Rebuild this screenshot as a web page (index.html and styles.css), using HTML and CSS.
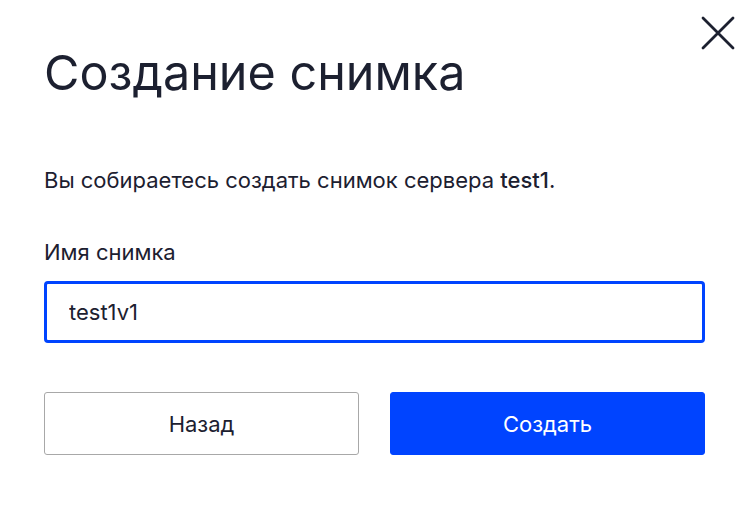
FILE: index.html
```html
<!DOCTYPE html>
<html>
  <head>
    <title>Создание снимка</title>
    <link rel="stylesheet" href="styles.css">
  </head>
  <body>
    <div class="modal">
      <button class="modal-close" aria-label="Закрыть">
        <svg width="34" height="34" viewBox="0 0 34 34">
          <path d="M2 2 L32 32 M32 2 L2 32" stroke="#1c2030" stroke-width="2.8" stroke-linecap="round" fill="none" />
        </svg>
      </button>
      <h1 class="modal-title">Создание снимка</h1>
      <p class="modal-text">Вы собираетесь создать снимок сервера <b>test1</b>.</p>
      <label class="field-label" for="snapshot-name">Имя снимка</label>
      <input class="field-input" type="text" id="snapshot-name" value="test1v1" />
      <div class="modal-actions">
        <button class="btn btn-secondary">Назад</button>
        <button class="btn btn-primary">Создать</button>
      </div>
    </div>
  </body>
</html>
```

FILE: styles.css
```css
body {
  margin: 0;
  background-color: #ffffff;
  font-family: Inter, "Noto Sans", sans-serif;
  color: #1c2030;
}

.modal {
  position: relative;
  width: 661px;
  padding: 43px 41px 0 44px;
}

.modal-close {
  position: absolute;
  top: 16px;
  right: 11px;
  padding: 0;
  border: none;
  background: none;
  cursor: pointer;
}

.modal-title {
  margin: 0;
  font-size: 48.5px;
  font-weight: 400;
  line-height: 60px;
}

.modal-text {
  margin: 64px 0 0;
  font-size: 22px;
  line-height: 26px;
}

.modal-text b {
  font-weight: 500;
}

.field-label {
  display: block;
  margin-top: 46px;
  font-size: 22px;
  line-height: 26px;
}

.field-input {
  display: block;
  box-sizing: border-box;
  width: 100%;
  height: 62px;
  margin-top: 16px;
  padding: 0 22px;
  border: 3px solid #0044ff;
  border-radius: 4px;
  font-family: inherit;
  font-size: 22px;
  color: #1c2030;
  outline: none;
}

.modal-actions {
  display: flex;
  gap: 31px;
  margin-top: 49px;
}

.btn {
  flex: 1;
  height: 63px;
  border-radius: 3px;
  font-family: inherit;
  font-size: 22px;
  cursor: pointer;
}

.btn-secondary {
  background-color: #ffffff;
  border: 1px solid #a8a8a8;
  color: #1c2030;
}

.btn-primary {
  background-color: #0044ff;
  border: 1px solid #0044ff;
  color: #ffffff;
}
```
